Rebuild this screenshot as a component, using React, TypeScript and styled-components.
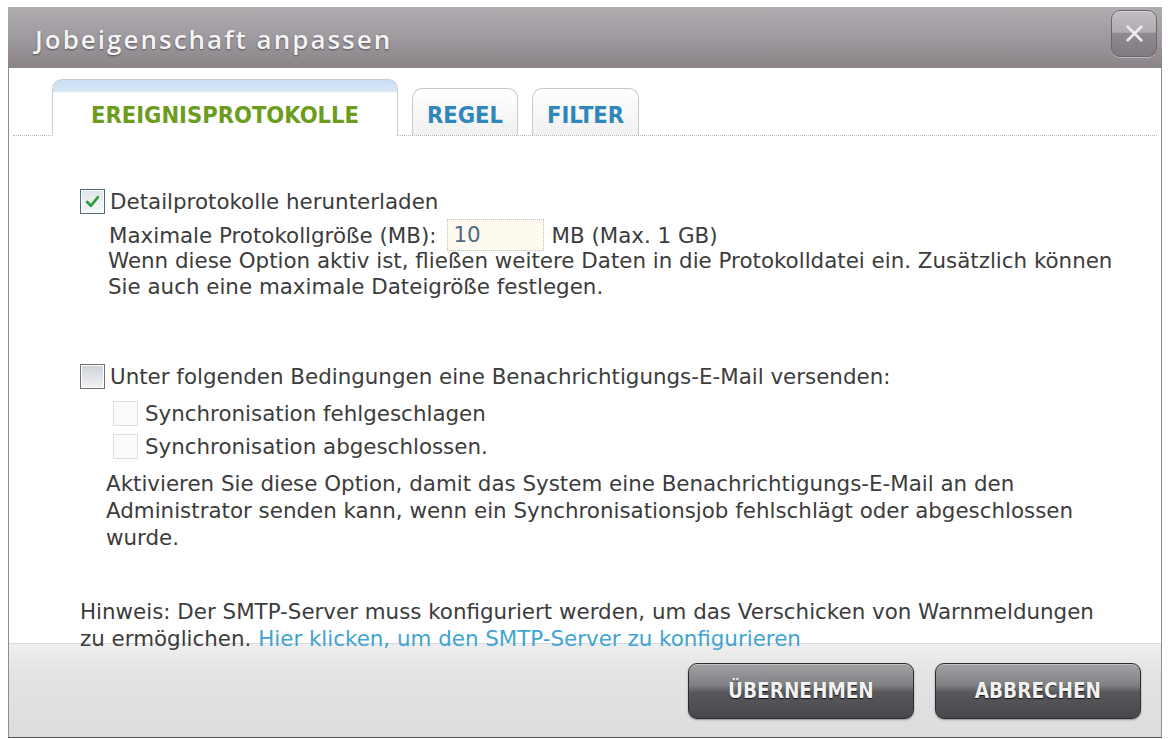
import React from "react";
import styled, { createGlobalStyle } from "styled-components";

const GlobalStyle = createGlobalStyle`
  body {
    margin: 0;
    background: #ffffff;
    font-family: "DejaVu Sans", "Liberation Sans", sans-serif;
  }
`;

const condensed = `
  font-family: "DejaVu Sans Condensed", "DejaVu Sans", sans-serif;
  font-stretch: condensed;
  font-weight: bold;
`;

const Dialog = styled.div`
  box-sizing: border-box;
  margin: 7px 0 0 8px;
  width: 1154px;
  height: 731px;
  display: flex;
  flex-direction: column;
  background: #ffffff;
  border: 1px solid #8e8e8e;
  border-top: none;
  border-bottom-color: #555;
`;

const TitleBar = styled.div`
  box-sizing: border-box;
  height: 61px;
  flex-shrink: 0;
  display: flex;
  align-items: center;
  justify-content: space-between;
  padding: 3px 5px 0 27px;
  margin: 0 -1px;
  background: linear-gradient(#b0adb1 0%, #9d989d 55%, #8a8388 100%);
`;

const Title = styled.div`
  font-family: "Open Sans", "DejaVu Sans", sans-serif;
  font-weight: 600;
  font-size: 26px;
  letter-spacing: 2px;
  color: #f4f4f4;
  text-shadow: 0 1px 2px rgba(0, 0, 0, 0.45);
`;

const CloseButton = styled.div`
  align-self: flex-start;
  width: 46px;
  height: 47px;
  box-sizing: border-box;
  border-radius: 9px;
  border: 1px solid #6a656b;
  background: linear-gradient(#c2bdc2 0%, #b1acb1 47%, #918991 50%, #827a82 100%);
  box-shadow: inset 0 1px 0 rgba(255, 255, 255, 0.35), 0 1px 0 #bdb8be;
  display: flex;
  align-items: center;
  justify-content: center;

  svg {
    width: 23px;
    height: 23px;
  }
`;

const TabStrip = styled.div`
  height: 67px;
  flex-shrink: 0;
  display: flex;
  align-items: flex-end;
  gap: 14px;
  padding-left: 39px;
  margin: 0 4px;
  border-bottom: 1px dotted #b9b9b9;
`;

const Tab = styled.div<{ $active?: boolean }>`
  box-sizing: border-box;
  display: flex;
  justify-content: center;
  ${condensed}
  font-size: 23.5px;
  border: 1px solid ${(p) => (p.$active ? "#c9ced4" : "#c8c8c8")};
  border-bottom: none;
  border-radius: 10px 10px 0 0;
  height: ${(p) => (p.$active ? "57px" : "47px")};
  margin-bottom: ${(p) => (p.$active ? "-1px" : "0")};
  padding: ${(p) => (p.$active ? "21px 38px 0" : "12px 14px 0")};
  color: ${(p) => (p.$active ? "#6c9c1e" : "#2f86b8")};
  background: ${(p) =>
    p.$active
      ? "linear-gradient(#c9def2 0px, #d6e6f5 11px, #ffffff 13px)"
      : "linear-gradient(#ffffff, #f0f0f0)"};
`;

const Body = styled.div`
  position: relative;
  z-index: 1;
  flex: 1;
  min-height: 0;
  padding: 52px 0 0 71px;
  color: #3c3c3c;
  font-size: 21.4px;
`;

const OptionRow = styled.div<{ $gap?: number }>`
  display: flex;
  align-items: center;
  gap: 5px;
  height: 26px;
  margin-top: ${(p) => p.$gap ?? 0}px;
  white-space: nowrap;
`;

const SubRow = styled.div<{ $gap?: number }>`
  display: flex;
  align-items: center;
  gap: 7px;
  height: 33px;
  margin: ${(p) => p.$gap ?? 0}px 0 0 33px;
  white-space: nowrap;
`;

const Box = styled.span<{ $variant: "checked" | "empty" | "disabled" }>`
  box-sizing: border-box;
  width: 25px;
  height: 25px;
  flex-shrink: 0;
  display: flex;
  align-items: center;
  justify-content: center;
  border: 1px solid
    ${(p) =>
      p.$variant === "checked"
        ? "#4f6c78"
        : p.$variant === "empty"
        ? "#707070"
        : "#dedede"};
  background: ${(p) =>
    p.$variant === "checked"
      ? "linear-gradient(#dce5ea, #f6f8f9)"
      : p.$variant === "empty"
      ? "linear-gradient(#cdd1d6, #f1f2f4)"
      : "#fbfbfb"};
  box-shadow: ${(p) =>
    p.$variant === "disabled" ? "none" : "inset 0 0 0 1px #ffffff"};

  svg {
    width: 17px;
    height: 17px;
  }
`;

const FieldRow = styled.div`
  display: flex;
  align-items: center;
  height: 32px;
  margin: 5px 0 0 29px;
  white-space: nowrap;
`;

const SizeInput = styled.div`
  box-sizing: border-box;
  width: 97px;
  height: 32px;
  margin: 0 7px 0 11px;
  padding: 2px 0 0 5px;
  border: 1px dotted #bdbdbd;
  background: #fffaf0;
  color: #4f6a80;
`;

const Description = styled.p<{ $indent: number; $gap: number; $line?: number }>`
  margin: ${(p) => p.$gap}px 0 0 ${(p) => p.$indent}px;
  line-height: ${(p) => p.$line ?? 27}px;
  white-space: nowrap;
`;

const Link = styled.span`
  color: #42a4d2;
`;

const Footer = styled.div`
  height: 94px;
  flex-shrink: 0;
  box-sizing: border-box;
  display: flex;
  justify-content: flex-end;
  align-items: flex-start;
  gap: 21px;
  padding: 19px 20px 0 0;
  border-top: 1px solid #dadada;
  background: linear-gradient(#efefef 0%, #e4e4e4 30%, #dcdcdc 100%);
`;

const DarkButton = styled.div`
  box-sizing: border-box;
  height: 56px;
  padding: 0 39px;
  display: flex;
  align-items: center;
  ${condensed}
  font-size: 20.5px;
  color: #f2f2f2;
  text-shadow: 0 1px 1px #111;
  border: 1px solid #2c2c2f;
  border-radius: 9px;
  background: linear-gradient(
    #a3a3a6 0%,
    #808084 40%,
    #58585d 52%,
    #47474c 100%
  );
  box-shadow: inset 0 1px 0 rgba(255, 255, 255, 0.35),
    0 1px 2px rgba(0, 0, 0, 0.35);
`;

const CheckMark = () => (
  <svg viewBox="0 0 16 16">
    <path
      d="M3 8.5 L6.5 12 L13 4"
      fill="none"
      stroke="#2f9e3a"
      strokeWidth="2.6"
      strokeLinecap="round"
      strokeLinejoin="round"
    />
  </svg>
);

const CloseIcon = () => (
  <svg viewBox="0 0 22 22">
    <path
      d="M4.5 4.5 L17.5 17.5 M17.5 4.5 L4.5 17.5"
      stroke="#eeeaee"
      strokeWidth="2.6"
      strokeLinecap="round"
    />
  </svg>
);

export default function App() {
  return (
    <>
      <GlobalStyle />
      <Dialog>
        <TitleBar>
          <Title>Jobeigenschaft anpassen</Title>
          <CloseButton>
            <CloseIcon />
          </CloseButton>
        </TitleBar>

        <TabStrip>
          <Tab $active>EREIGNISPROTOKOLLE</Tab>
          <Tab>REGEL</Tab>
          <Tab>FILTER</Tab>
        </TabStrip>

        <Body>
          <OptionRow>
            <Box $variant="checked">
              <CheckMark />
            </Box>
            <span>Detailprotokolle herunterladen</span>
          </OptionRow>
          <FieldRow>
            <span>Maximale Protokollgröße (MB):</span>
            <SizeInput>10</SizeInput>
            <span>MB (Max. 1 GB)</span>
          </FieldRow>
          <Description $indent={28} $gap={-3} $line={26}>
            Wenn diese Option aktiv ist, fließen weitere Daten in die
            Protokolldatei ein. Zusätzlich können
            <br />
            Sie auch eine maximale Dateigröße festlegen.
          </Description>

          <OptionRow $gap={63}>
            <Box $variant="empty" />
            <span>
              Unter folgenden Bedingungen eine Benachrichtigungs-E-Mail
              versenden:
            </span>
          </OptionRow>
          <SubRow $gap={8}>
            <Box $variant="disabled" />
            <span>Synchronisation fehlgeschlagen</span>
          </SubRow>
          <SubRow>
            <Box $variant="disabled" />
            <span>Synchronisation abgeschlossen.</span>
          </SubRow>
          <Description $indent={26} $gap={7}>
            Aktivieren Sie diese Option, damit das System eine
            Benachrichtigungs-E-Mail an den
            <br />
            Administrator senden kann, wenn ein Synchronisationsjob
            fehlschlägt oder abgeschlossen
            <br />
            wurde.
          </Description>

          <Description $indent={0} $gap={47}>
            Hinweis: Der SMTP-Server muss konfiguriert werden, um das
            Verschicken von Warnmeldungen
            <br />
            zu ermöglichen.{" "}
            <Link>Hier klicken, um den SMTP-Server zu konfigurieren</Link>
          </Description>
        </Body>

        <Footer>
          <DarkButton>ÜBERNEHMEN</DarkButton>
          <DarkButton>ABBRECHEN</DarkButton>
        </Footer>
      </Dialog>
    </>
  );
}
